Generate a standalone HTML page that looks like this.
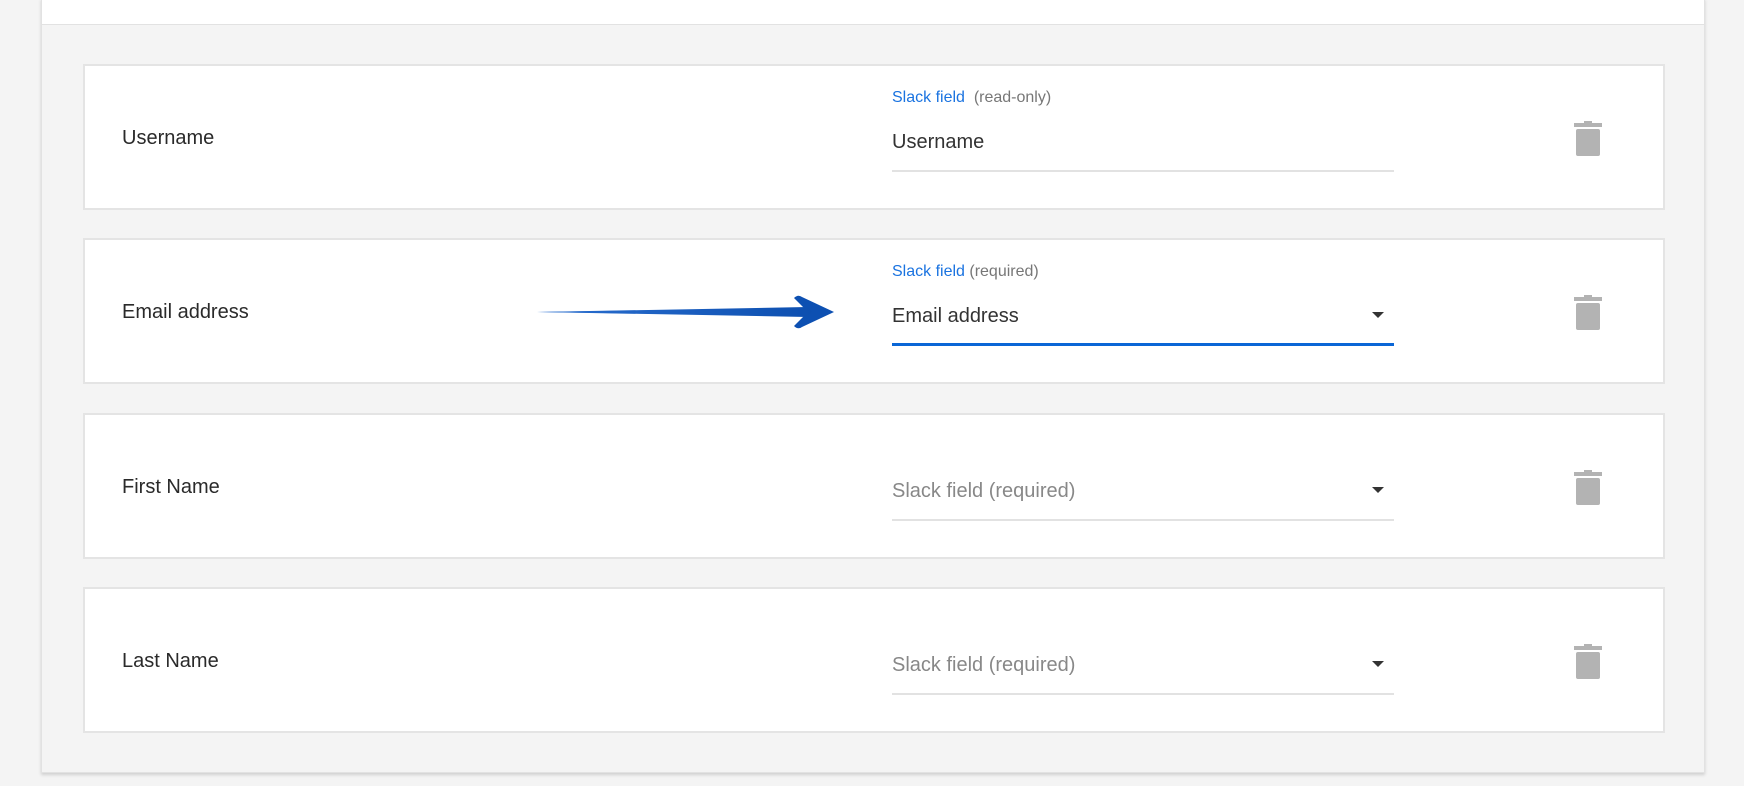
<!DOCTYPE html>
<html><head><meta charset="utf-8">
<style>
*{margin:0;padding:0;box-sizing:border-box}
body{width:1744px;height:786px;background:#f4f4f4;font-family:"Liberation Sans",sans-serif;position:relative;overflow:hidden}
.panel{position:absolute;left:41px;top:-2px;width:1664px;height:775px;background:#f4f4f4;border:1px solid #e2e2e2;box-shadow:0 2px 3px rgba(0,0,0,.15)}
.top{position:absolute;left:41px;top:0;width:1664px;height:25px;background:#fff;border:1px solid #e2e2e2;border-top:none}
.card{position:absolute;left:83px;width:1582px;height:146px;background:#fff;border:2px solid #e4e4e4}
.lbl{position:absolute;left:37px;top:61px;font-size:20px;color:#2a2a2a}
.f{position:absolute;left:807px;width:502px}
.small{position:absolute;top:23px;left:0;font-size:16px;color:#1a73e0;white-space:nowrap}
.small span{color:#777}
.val{position:absolute;left:0;top:65px;font-size:20px;color:#333}
.ph{color:#888}
.ul{position:absolute;left:0;top:104px;width:502px;height:2px;background:#e2e2e2}
.ul.blue{height:3px;background:#0a66d6;top:103px}
.caret{position:absolute;left:480px;top:72px;width:0;height:0;border-left:6px solid transparent;border-right:6px solid transparent;border-top:6px solid #333}
.trash{position:absolute;left:1488px;top:55px}
</style></head><body>
<div class="panel"></div>
<div class="top"></div>

<div class="card" style="top:64px">
 <div class="lbl">Username</div>
 <div class="f"><div class="small">Slack field <span>&nbsp;(read-only)</span></div><div class="val">Username</div><div class="ul"></div></div>
 <svg class="trash" width="30" height="36" viewBox="0 0 30 36"><rect x="11" y="0" width="8" height="3" fill="#b3b3b3"/><rect x="1" y="2" width="28" height="4" fill="#b3b3b3"/><rect x="3" y="8" width="24" height="27" rx="2" fill="#b3b3b3"/></svg>
</div>

<div class="card" style="top:238px">
 <div class="lbl">Email address</div>
 <div class="f"><div class="small">Slack field <span>(required)</span></div><div class="val">Email address</div><div class="caret"></div><div class="ul blue"></div></div>
 <svg class="trash" width="30" height="36" viewBox="0 0 30 36"><rect x="11" y="0" width="8" height="3" fill="#b3b3b3"/><rect x="1" y="2" width="28" height="4" fill="#b3b3b3"/><rect x="3" y="8" width="24" height="27" rx="2" fill="#b3b3b3"/></svg>
</div>

<div class="card" style="top:413px">
 <div class="lbl">First Name</div>
 <div class="f"><div class="val ph">Slack field (required)</div><div class="caret"></div><div class="ul"></div></div>
 <svg class="trash" width="30" height="36" viewBox="0 0 30 36"><rect x="11" y="0" width="8" height="3" fill="#b3b3b3"/><rect x="1" y="2" width="28" height="4" fill="#b3b3b3"/><rect x="3" y="8" width="24" height="27" rx="2" fill="#b3b3b3"/></svg>
</div>

<div class="card" style="top:587px">
 <div class="lbl">Last Name</div>
 <div class="f"><div class="val ph">Slack field (required)</div><div class="caret"></div><div class="ul"></div></div>
 <svg class="trash" width="30" height="36" viewBox="0 0 30 36"><rect x="11" y="0" width="8" height="3" fill="#b3b3b3"/><rect x="1" y="2" width="28" height="4" fill="#b3b3b3"/><rect x="3" y="8" width="24" height="27" rx="2" fill="#b3b3b3"/></svg>
</div>

<svg style="position:absolute;left:530px;top:290px" width="310" height="45" viewBox="0 0 310 45">
 <defs><linearGradient id="g" x1="0" x2="1"><stop offset="0" stop-color="#2a6fd0"/><stop offset="1" stop-color="#0d4fb0"/></linearGradient></defs>
 <path d="M7 22 L275 18 L275 26 Z" fill="url(#g)"/>
 <path d="M264 8 Q268 4 272 7 L304 22 L272 37 Q268 40 264 36 L278 22 Z" fill="#0d50b2"/>
 <path d="M7 22 L278 17 L282 22 L278 27 Z" fill="url(#g)"/>
</svg>
</body></html>
